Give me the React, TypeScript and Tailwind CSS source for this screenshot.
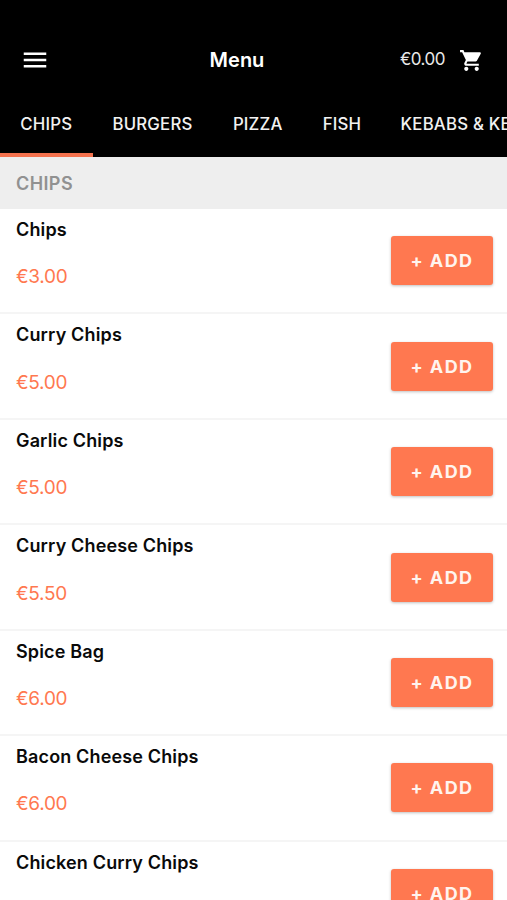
import { useState } from 'react'
import { MdMenu } from 'react-icons/md'

interface Item {
  name: string
  price: number
}

const tabs = [
  { label: 'CHIPS', width: 'w-[92.5px]' },
  { label: 'BURGERS', width: 'w-[120px]' },
  { label: 'PIZZA', width: 'w-[90.5px]' },
  { label: 'FISH', width: 'w-[78px]' },
  { label: 'KEBABS & KEBABS', width: 'w-[195px]' },
]

const items: Item[] = [
  { name: 'Chips', price: 3 },
  { name: 'Curry Chips', price: 5 },
  { name: 'Garlic Chips', price: 5 },
  { name: 'Curry Cheese Chips', price: 5.5 },
  { name: 'Spice Bag', price: 6 },
  { name: 'Bacon Cheese Chips', price: 6 },
  { name: 'Chicken Curry Chips', price: 6.5 },
]

const euro = (n: number) => `€${n.toFixed(2)}`

function CartIcon() {
  return (
    <svg viewBox="0 0 24 24" className="mt-px size-[25px]" fill="currentColor">
      <path d="M7 18c-1.1 0-1.99.9-1.99 2S5.9 22 7 22s2-.9 2-2-.9-2-2-2z" />
      <path d="M17 18c-1.1 0-1.99.9-1.99 2s.89 2 1.99 2 2-.9 2-2-.9-2-2-2z" />
      <path d="M1 2v2h2l3.6 7.59-1.35 2.45c-.16.28-.25.61-.25.96 0 1.1.9 2 2 2h12v-2H7.42c-.14 0-.25-.11-.25-.25l.03-.12.9-1.63h7.45c.75 0 1.41-.41 1.75-1.03L20.88 5.48A1 1 0 0 0 20 4H5.21l-.94-2H1z" />
    </svg>
  )
}

function MenuRow({ item, onAdd }: { item: Item; onAdd: () => void }) {
  return (
    <li className="flex h-[105.45px] shrink-0 justify-between border-b-2 border-[#f5f5f5] pl-4 pr-[14px]">
      <div className="pt-[8px]">
        <h3 className="text-[18px] font-semibold leading-[26px] tracking-[0.15px] text-[#0a0a0a]">{item.name}</h3>
        <p className="mt-[21.3px] text-[19px] leading-[26px] tracking-[-0.3px] text-[#ff7850]">{euro(item.price)}</p>
      </div>
      <button
        onClick={onAdd}
        className="mt-[27.2px] h-[49px] w-[102px] rounded-[3px] bg-[#ff7850] text-[18px] font-bold tracking-[1.4px] text-[#fff4ee] shadow-[0_1px_3px_rgba(0,0,0,0.25)]"
      >
        + ADD
      </button>
    </li>
  )
}

export default function App() {
  const [active, setActive] = useState('CHIPS')
  const [total, setTotal] = useState(0)

  return (
    <div className="flex h-[900px] w-[507px] flex-col overflow-hidden bg-white font-['Inter',sans-serif]">
      <header className="h-[157px] shrink-0 bg-black text-white">
        <div className="grid h-[91px] grid-cols-[160px_154px_1fr] items-center pt-[28px]">
          <button className="ml-5 w-[30px]" aria-label="Open menu"><MdMenu size={30} /></button>
          <h1 className="text-center text-[20px] font-semibold">Menu</h1>
          <div className="flex items-center justify-end gap-[13.5px] pr-[23.5px]">
            <span className="pt-px text-[17px] tracking-[-0.5px] text-[#e8e8e8]">{euro(total)}</span>
            <CartIcon />
          </div>
        </div>
        <nav className="flex h-[66px] overflow-hidden">
          {tabs.map(t => (
            <button
              key={t.label}
              onClick={() => setActive(t.label)}
              className={`${t.width} shrink-0 whitespace-nowrap border-b-4 pt-[5px] text-[16.8px] font-medium tracking-[0.2px] text-[#f2f2f2] ${active === t.label ? 'border-[#f4724e]' : 'border-transparent'}`}
            >
              {t.label}
            </button>
          ))}
        </nav>
      </header>

      <h2 className="h-[52px] shrink-0 bg-[#eeeeee] pl-4 text-[18px] font-semibold leading-[53px] tracking-[0.4px] text-[#919191]">{active}</h2>

      <ul className="flex flex-col">
        {items.map(item => (
          <MenuRow key={item.name} item={item} onAdd={() => setTotal(total + item.price)} />
        ))}
      </ul>
    </div>
  )
}
